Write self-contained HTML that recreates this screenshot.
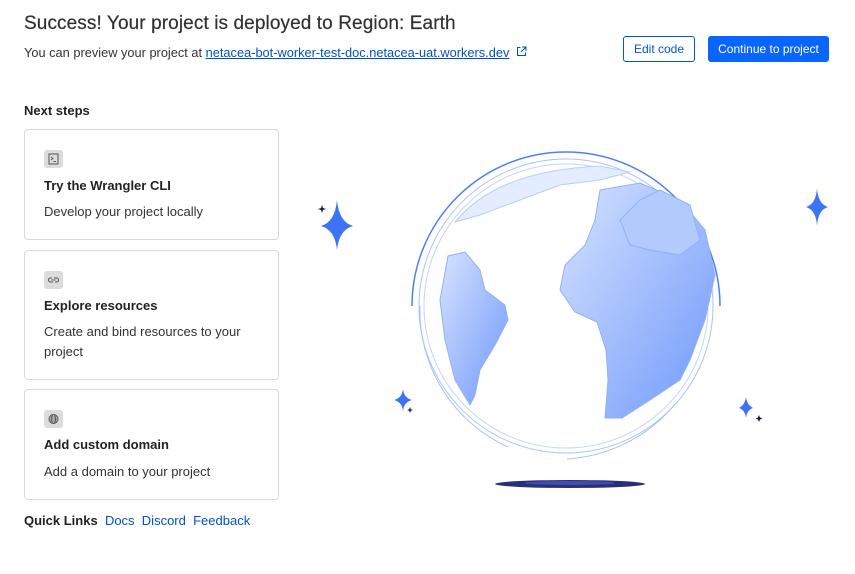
<!DOCTYPE html>
<html><head><meta charset="utf-8"><style>
*{box-sizing:border-box;margin:0;padding:0}
body{width:855px;height:574px;background:#fff;font-family:"Liberation Sans",sans-serif;color:#222;position:relative;overflow:hidden}
.a{position:absolute;white-space:nowrap}
h1{position:absolute;left:24px;top:13px;font-size:19px;font-weight:normal;color:#313131;letter-spacing:0.1px;-webkit-text-stroke:0.2px #313131}
.card{position:absolute;left:24px;width:255px;border:1px solid #d9d9d9;border-radius:4px}
.ic{position:absolute;left:19px;top:20px;width:19px;height:18px;background:#dcdcdc;border-radius:3px}
.ct{position:absolute;left:19px;font-size:13px;font-weight:bold;color:#222}
.cd{position:absolute;left:19px;font-size:13px;color:#333;line-height:20px}
.btn{position:absolute;top:36px;height:26px;border-radius:3px;font-size:12px;text-align:center;line-height:24px}
a{color:#0051c3}
</style></head><body>
<h1>Success! Your project is deployed to Region: Earth</h1>
<div class="a" style="left:24px;top:45px;font-size:12.8px;color:#333">You can preview your project at <a style="text-decoration:underline">netacea-bot-worker-test-doc.netacea-uat.workers.dev</a> <svg width="11" height="11" viewBox="0 0 11 11" style="vertical-align:0;margin-left:3px"><path d="M4.5 1.5H1.5v8h8v-3M6 1h4v4M10 1L5 6" fill="none" stroke="#0051c3" stroke-width="1"/></svg></div>
<div class="btn" style="left:623px;width:72px;border:1px solid #0055dc;color:#0055dc">Edit code</div>
<div class="btn" style="left:708px;width:121px;background:#0866ff;color:#fff;line-height:26px">Continue to project</div>
<div class="a" style="left:24px;top:103px;font-size:13px;font-weight:bold">Next steps</div>

<div class="card" style="top:129px;height:111px">
<div class="ic"><svg width="19" height="18"><rect x="5" y="4" width="9" height="10" fill="none" stroke="#555" stroke-width="1"/><path d="M7 7l2 1.5L7 10M9.5 11.5h2.5" fill="none" stroke="#555"/></svg></div>
<div class="ct" style="top:48px">Try the Wrangler CLI</div>
<div class="cd" style="top:72px">Develop your project locally</div></div>

<div class="card" style="top:250px;height:130px">
<div class="ic"><svg width="19" height="18"><path d="M8 7H6.5a2 2 0 0 0 0 4H9M11 11h1.5a2 2 0 0 0 0-4H10M7.5 9h4" fill="none" stroke="#555"/></svg></div>
<div class="ct" style="top:47px">Explore resources</div>
<div class="cd" style="top:71px;white-space:normal;width:210px">Create and bind resources to your project</div></div>

<div class="card" style="top:389px;height:111px">
<div class="ic"><svg width="19" height="18"><circle cx="9.5" cy="9" r="4.5" fill="none" stroke="#555"/><ellipse cx="9.5" cy="9" rx="2" ry="4.5" fill="none" stroke="#555"/><path d="M5 9h9M5.8 7h7.4M5.8 11h7.4" stroke="#555" stroke-width=".8"/></svg></div>
<div class="ct" style="top:47px">Add custom domain</div>
<div class="cd" style="top:72px">Add a domain to your project</div></div>

<div class="a" style="left:24px;top:513px;font-size:13px"><b>Quick Links</b>&nbsp; <span style="color:#0051c3">Docs</span>&nbsp;&nbsp;<span style="color:#0051c3">Discord</span>&nbsp;&nbsp;<span style="color:#0051c3">Feedback</span></div>

<svg class="a" style="left:0;top:0" width="855" height="574" viewBox="0 0 855 574">
<defs><linearGradient id="g" x1="0" y1="0" x2="1" y2="1"><stop offset="0" stop-color="#d6e3ff"/><stop offset="1" stop-color="#6f98fa"/></linearGradient></defs>
<path d="M412 306A153 153 0 0 1 720 306" fill="none" stroke="#4d7ff5" stroke-width="1.5"/>
<circle cx="566" cy="306" r="147" fill="none" stroke="#a9c2fb" stroke-width="1"/>
<circle cx="566" cy="306" r="142" fill="none" stroke="#c3d5fd" stroke-width="1"/>
<path d="M420 306A150 150 0 0 0 508 447M567 459A152 152 0 0 0 675 404" fill="none" stroke="#a9c2fb"/>
<path d="M455 222C480 192 520 170 600 166L630 172 600 180 560 185 520 200 480 215Z" fill="#e4ecff" stroke="#b8cdfb"/>
<path d="M448 256L465 252 480 270 485 290 505 305 508 320 495 345 480 370 475 395 470 405 455 380 445 340 440 300Z" fill="url(#g)" stroke="#8fb0fa"/>
<path d="M600 190L640 183 680 200 705 230 715 275 705 320 690 360 680 380 650 400 622 418 605 418 608 380 606 350 597 322 575 312 560 290 565 265 585 245 595 220Z" fill="url(#g)" stroke="#8fb0fa"/>
<path d="M620 220L640 200 660 190 690 205 700 240 680 255 650 250 630 245Z" fill="#b3cafc" stroke="#8fb0fa"/>
<ellipse cx="570" cy="484" rx="75" ry="4" fill="#2a2f7a"/>
<ellipse cx="570" cy="483" rx="45" ry="2" fill="#3e4db0"/>
<g fill="#3d74f5">
<path d="M337 200Q339 222 353 226Q339 230 337 250Q335 230 321 226Q335 222 337 200Z"/>
<path d="M817 188Q818 204 828 207Q818 210 817 226Q816 210 806 207Q816 204 817 188Z"/>
<path d="M403 389Q404 398 412 400Q404 402 403 411Q402 402 394 400Q402 398 403 389Z"/>
<path d="M746 397Q747 405 753 408Q747 410 746 418Q745 410 739 408Q745 405 746 397Z"/>
</g>
<g fill="#1a1a4a">
<path d="M322 205l1 3 3 1-3 1-1 3-1-3-3-1 3-1z"/>
<path d="M410 407l.8 2.2 2.2.8-2.2.8-.8 2.2-.8-2.2-2.2-.8 2.2-.8z"/>
<path d="M759 415l1 2.5 2.5 1-2.5 1-1 2.5-1-2.5-2.5-1 2.5-1z"/>
</g>
</svg>
</body></html>
